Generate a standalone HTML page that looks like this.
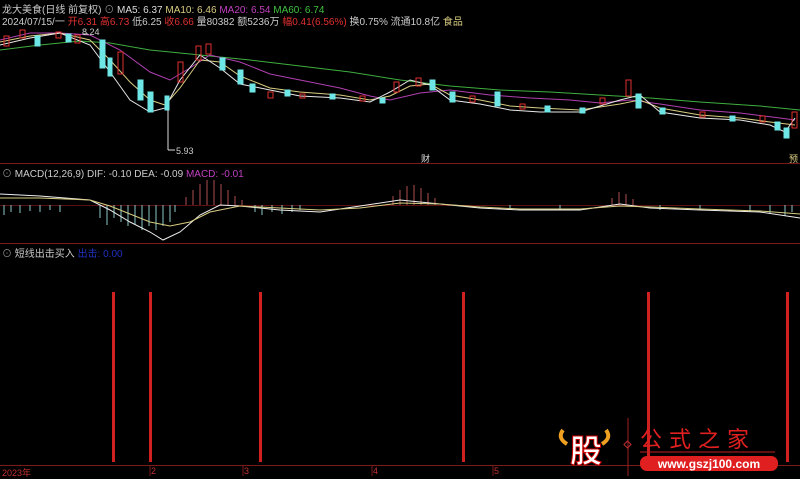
<!DOCTYPE html>
<html><head><meta charset="utf-8"><style>
body{margin:0;width:800px;height:476px;background:#000;overflow:hidden;font-family:"Liberation Sans","Noto Sans CJK SC",sans-serif;}
svg{position:absolute;left:0;top:0}
.t{position:absolute;font-size:10px;white-space:nowrap;color:#ccc}
</style></head><body>
<svg width="800" height="476">
<g stroke="#7a1a1a" stroke-width="1">
<line x1="0" y1="163.5" x2="800" y2="163.5"/>
<line x1="0" y1="243.5" x2="800" y2="243.5"/>
<line x1="0" y1="465.5" x2="800" y2="465.5"/>
</g>
<line x1="0" y1="205.5" x2="800" y2="205.5" stroke="#5a1010"/>
<!-- MA60 -->
<polyline fill="none" stroke="#3fae3f" stroke-width="1" points="0,50 40,45 80,41 110,43 150,50 200,55 250,60 300,66 350,72 400,80 450,86 500,90 550,92 600,95 650,98 700,102 760,106 800,110"/>
<!-- MA20 -->
<polyline fill="none" stroke="#b040b0" stroke-width="1" points="0,40 30,33 60,33 90,35 120,50 150,72 170,80 190,68 210,55 240,62 270,74 300,80 340,88 370,96 390,100 420,93 450,90 490,95 530,98 570,100 600,103 630,100 660,104 700,110 740,113 780,118 795,120"/>
<!-- MA10 -->
<polyline fill="none" stroke="#d8cc80" stroke-width="1" points="0,42 30,36 60,33 90,40 110,60 130,82 150,100 165,105 180,88 200,60 220,62 240,76 270,88 300,92 340,95 370,100 390,96 410,86 430,84 450,95 480,100 510,106 540,108 580,110 620,104 640,100 660,108 700,115 740,118 770,122 795,125"/>
<!-- MA5 -->
<polyline fill="none" stroke="#e8e8e8" stroke-width="1" points="0,45 30,38 60,33 90,45 110,72 130,100 150,112 165,108 180,80 200,55 220,68 240,84 270,90 300,96 340,98 370,102 390,92 410,80 430,85 450,100 480,104 510,110 540,112 580,112 620,100 640,95 660,112 700,118 740,120 770,125 785,132 795,118"/>
<!-- candles -->
<g stroke-width="1">
<g fill="none" stroke="#e03030">
<rect x="4" y="36" width="5" height="10"/><rect x="20" y="30" width="5" height="8"/><rect x="56" y="32" width="5" height="6"/><rect x="75" y="35" width="5" height="8"/>
<rect x="118" y="52" width="5" height="22"/><rect x="178" y="62" width="5" height="20"/><rect x="196" y="46" width="5" height="14"/><rect x="206" y="44" width="5" height="10"/>
<rect x="268" y="92" width="5" height="6"/><rect x="300" y="94" width="5" height="4"/><rect x="360" y="96" width="5" height="5"/><rect x="394" y="82" width="5" height="10"/>
<rect x="416" y="78" width="5" height="8"/><rect x="470" y="96" width="5" height="6"/><rect x="520" y="104" width="5" height="5"/><rect x="600" y="98" width="5" height="6"/>
<rect x="626" y="80" width="5" height="16"/><rect x="700" y="112" width="5" height="5"/><rect x="760" y="116" width="5" height="6"/><rect x="792" y="112" width="5" height="16"/>
</g>
<g fill="#6ee6e6" stroke="#6ee6e6">
<rect x="35" y="36" width="5" height="10"/><rect x="66" y="34" width="5" height="8"/><rect x="100" y="40" width="5" height="28"/><rect x="108" y="58" width="4" height="18"/>
<rect x="138" y="80" width="5" height="20"/><rect x="148" y="92" width="5" height="20"/><rect x="165" y="96" width="4" height="14"/><rect x="220" y="58" width="5" height="12"/>
<rect x="238" y="70" width="5" height="14"/><rect x="250" y="84" width="5" height="8"/><rect x="285" y="90" width="5" height="6"/><rect x="330" y="94" width="5" height="5"/>
<rect x="380" y="98" width="5" height="5"/><rect x="430" y="80" width="5" height="10"/><rect x="450" y="92" width="5" height="10"/><rect x="495" y="92" width="5" height="14"/>
<rect x="545" y="106" width="5" height="6"/><rect x="580" y="108" width="5" height="5"/><rect x="636" y="94" width="5" height="14"/><rect x="660" y="108" width="5" height="6"/>
<rect x="730" y="116" width="5" height="5"/><rect x="775" y="122" width="5" height="8"/><rect x="784" y="128" width="5" height="10"/>
</g>
<g stroke="#ddd"><line x1="168" y1="110" x2="168" y2="150"/><line x1="168" y1="150" x2="175" y2="150"/><line x1="83" y1="34" x2="88" y2="34"/></g>
</g>
<!-- MACD bars -->
<g stroke-width="1">
<g stroke="#b05050"><line x1="186" y1="205" x2="186" y2="197"/><line x1="193" y1="205" x2="193" y2="190"/><line x1="200" y1="205" x2="200" y2="184"/><line x1="207" y1="205" x2="207" y2="180"/><line x1="214" y1="205" x2="214" y2="180"/><line x1="221" y1="205" x2="221" y2="184"/><line x1="228" y1="205" x2="228" y2="190"/><line x1="235" y1="205" x2="235" y2="196"/><line x1="242" y1="205" x2="242" y2="200"/>
<line x1="393" y1="205" x2="393" y2="196"/><line x1="400" y1="205" x2="400" y2="190"/><line x1="407" y1="205" x2="407" y2="186"/><line x1="414" y1="205" x2="414" y2="185"/><line x1="421" y1="205" x2="421" y2="188"/><line x1="428" y1="205" x2="428" y2="193"/><line x1="435" y1="205" x2="435" y2="198"/>
<line x1="612" y1="205" x2="612" y2="198"/><line x1="619" y1="205" x2="619" y2="192"/><line x1="626" y1="205" x2="626" y2="194"/><line x1="633" y1="205" x2="633" y2="199"/></g>
<g stroke="#8cc8c8"><line x1="4" y1="205" x2="4" y2="215"/><line x1="11" y1="205" x2="11" y2="212"/><line x1="20" y1="205" x2="20" y2="213"/><line x1="30" y1="205" x2="30" y2="211"/><line x1="40" y1="205" x2="40" y2="212"/><line x1="50" y1="205" x2="50" y2="210"/><line x1="60" y1="205" x2="60" y2="212"/>
<line x1="100" y1="205" x2="100" y2="218"/><line x1="107" y1="205" x2="107" y2="225"/><line x1="114" y1="205" x2="114" y2="218"/><line x1="121" y1="205" x2="121" y2="222"/><line x1="128" y1="205" x2="128" y2="226"/><line x1="135" y1="205" x2="135" y2="224"/><line x1="142" y1="205" x2="142" y2="230"/><line x1="149" y1="205" x2="149" y2="226"/><line x1="156" y1="205" x2="156" y2="230"/><line x1="163" y1="205" x2="163" y2="226"/><line x1="170" y1="205" x2="170" y2="222"/><line x1="175" y1="205" x2="175" y2="212"/>
<line x1="255" y1="205" x2="255" y2="212"/><line x1="262" y1="205" x2="262" y2="215"/><line x1="272" y1="205" x2="272" y2="212"/><line x1="282" y1="205" x2="282" y2="214"/><line x1="292" y1="205" x2="292" y2="212"/><line x1="300" y1="205" x2="300" y2="210"/>
<line x1="510" y1="205" x2="510" y2="210"/><line x1="560" y1="205" x2="560" y2="209"/><line x1="660" y1="205" x2="660" y2="210"/><line x1="700" y1="205" x2="700" y2="210"/><line x1="750" y1="205" x2="750" y2="212"/><line x1="770" y1="205" x2="770" y2="214"/><line x1="785" y1="205" x2="785" y2="216"/><line x1="792" y1="205" x2="792" y2="212"/></g>
</g>
<polyline fill="none" stroke="#eee" points="0,194 40,196 90,200 110,210 130,222 150,232 163,240 180,232 200,215 220,205 240,206 280,210 320,212 360,206 400,200 440,204 480,208 520,210 580,210 620,204 650,208 700,210 760,212 800,218"/>
<polyline fill="none" stroke="#d8cc80" points="0,198 40,198 90,200 110,206 130,214 150,222 170,226 190,222 210,212 240,206 280,208 320,210 360,208 400,203 440,204 480,207 520,209 580,209 620,206 650,207 700,209 760,211 800,214"/>
<!-- signal bars -->
<g fill="#d02020">
<rect x="112" y="292" width="3" height="170"/><rect x="149" y="292" width="3" height="170"/><rect x="259" y="292" width="3" height="170"/><rect x="462" y="292" width="3" height="170"/><rect x="647" y="292" width="3" height="170"/><rect x="786" y="292" width="3" height="170"/>
</g>
<g stroke="#7a1a1a"><line x1="150" y1="465" x2="150" y2="476"/><line x1="243" y1="465" x2="243" y2="476"/><line x1="372" y1="465" x2="372" y2="476"/><line x1="493" y1="465" x2="493" y2="476"/></g>
<!-- logo -->
<path d="M563,430 q-6,8 4,14 M606,430 q6,8 -4,14" stroke="#f0a020" stroke-width="4" fill="none"/>
<text x="570" y="462" font-size="32" font-weight="bold" fill="#fff" stroke="#c00" stroke-width="1" font-family="Noto Sans CJK SC">股</text>
<line x1="628" y1="418" x2="628" y2="476" stroke="#a02020"/>
<rect x="625" y="442" width="5" height="5" transform="rotate(45 627.5 444.5)" fill="none" stroke="#c03030"/>
<text x="640" y="447" font-size="22" fill="#e02020" font-family="Noto Sans CJK SC" letter-spacing="7">公式之家</text>
<line x1="640" y1="452" x2="775" y2="452" stroke="#c02020"/>
<rect x="640" y="456" width="138" height="15" rx="7" fill="#e02020"/>
<text x="709" y="468" font-size="12" font-weight="bold" fill="#fff" text-anchor="middle">www.gszj100.com</text>
</svg>
<div class="t" style="left:2px;top:1px">龙大美食(日线 前复权) <span style="color:#888">⊙</span> <span style="color:#ddd">MA5: 6.37</span> <span style="color:#d8cc80">MA10: 6.46</span> <span style="color:#c040c0">MA20: 6.54</span> <span style="color:#40c040">MA60: 6.74</span></div>
<div class="t" style="left:2px;top:13px">2024/07/15/一 <span style="color:#e03030">开6.31 高6.73</span> 低6.25 <span style="color:#e03030">收6.66</span> 量80382 额5236万 <span style="color:#e03030">幅0.41(6.56%)</span> 换0.75% 流通10.8亿 <span style="color:#d8cc80">食品</span></div>
<div class="t" style="left:82px;top:27px;font-size:9px">8.24</div>
<div class="t" style="left:176px;top:146px;font-size:9px">5.93</div>
<div class="t" style="left:421px;top:152px;font-size:9px;color:#ddd">财</div>
<div class="t" style="left:789px;top:152px;font-size:9px;color:#d8cc80">预</div>
<div class="t" style="left:2px;top:165px"><span style="color:#888">⊙</span> MACD(12,26,9) DIF: -0.10 DEA: -0.09 <span style="color:#c040c0">MACD: -0.01</span></div>
<div class="t" style="left:2px;top:245px"><span style="color:#888">⊙</span> 短线出击买入 <span style="color:#2030c0">出击: 0.00</span></div>
<div class="t" style="left:2px;top:466px;font-size:9px;color:#c03030">2023年</div>
<div class="t" style="left:151px;top:466px;font-size:9px;color:#c03030">2</div>
<div class="t" style="left:244px;top:466px;font-size:9px;color:#c03030">3</div>
<div class="t" style="left:373px;top:466px;font-size:9px;color:#c03030">4</div>
<div class="t" style="left:494px;top:466px;font-size:9px;color:#c03030">5</div>
</body></html>
